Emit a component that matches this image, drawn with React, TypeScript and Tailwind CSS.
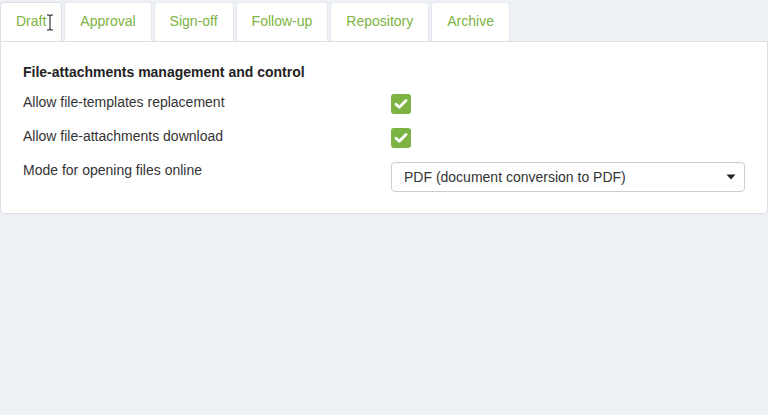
import React from "react";

const tabs = ["Draft", "Approval", "Sign-off", "Follow-up", "Repository", "Archive"];

function Check() {
  return (
    <div className="w-[20px] h-[20px] rounded-[3px] bg-[#7cb342] flex items-center justify-center">
      <svg width="14" height="12" viewBox="0 0 14 12">
        <path d="M2 6.2 L5.3 9.3 L12 2.6" fill="none" stroke="#fff" strokeWidth="2.8" strokeLinecap="round" strokeLinejoin="round" />
      </svg>
    </div>
  );
}

export default function App() {
  return (
    <div
      className="w-[768px] h-[415px] bg-[#edf1f5] relative text-[14px] leading-[20px] text-[#333]"
      style={{ fontFamily: '"Liberation Sans", Arial, sans-serif' }}
    >
      <div className="flex pt-[2px] gap-[2px] relative z-10">
        {tabs.map((t, i) => (
          <div
            key={t}
            className={
              "h-[39px] px-[15px] pb-[2px] flex items-center bg-white rounded-t-[4px] text-[#7cb342] border border-b-0 " +
              (i === 0 ? "border-[#dde1e5]" : "border-[#e6eaee]")
            }
          >
            {t}
          </div>
        ))}
      </div>
      <div className="w-[768px] bg-white border border-[#dcdfe3] rounded-b-[4px] pt-[20px] pb-[21px] px-[22px]">
        <div className="font-bold text-[#222] mb-[10px]">File-attachments management and control</div>
        <div className="flex h-[22px] mb-[12px]">
          <div className="w-[368px]">Allow file-templates replacement</div>
          <div className="pt-[2px]">
            <Check />
          </div>
        </div>
        <div className="flex h-[22px] mb-[12px]">
          <div className="w-[368px]">Allow file-attachments download</div>
          <div className="pt-[2px]">
            <Check />
          </div>
        </div>
        <div className="flex">
          <div className="w-[368px]">Mode for opening files online</div>
          <div className="pt-[2px]">
            <div className="w-[354px] h-[30px] border border-[#ccc] rounded-[4px] flex items-center justify-between pl-[12px] pr-[8px]">
              <span>PDF (document conversion to PDF)</span>
              <svg width="10" height="6" viewBox="0 0 10 6">
                <path d="M0.5 0.5 L9.5 0.5 L5 5.5 Z" fill="#222" />
              </svg>
            </div>
          </div>
        </div>
      </div>
      <svg className="absolute left-[46px] top-[14px] z-20" width="8" height="17" viewBox="0 0 8 17">
        <path d="M1 1 H3 M5 1 H7 M4 1.5 V15.5 M1 16 H3 M5 16 H7 M3 1 Q4 1 4 2 Q4 1 5 1 M3 16 Q4 16 4 15 Q4 16 5 16" fill="none" stroke="#111" strokeWidth="1" />
      </svg>
    </div>
  );
}
